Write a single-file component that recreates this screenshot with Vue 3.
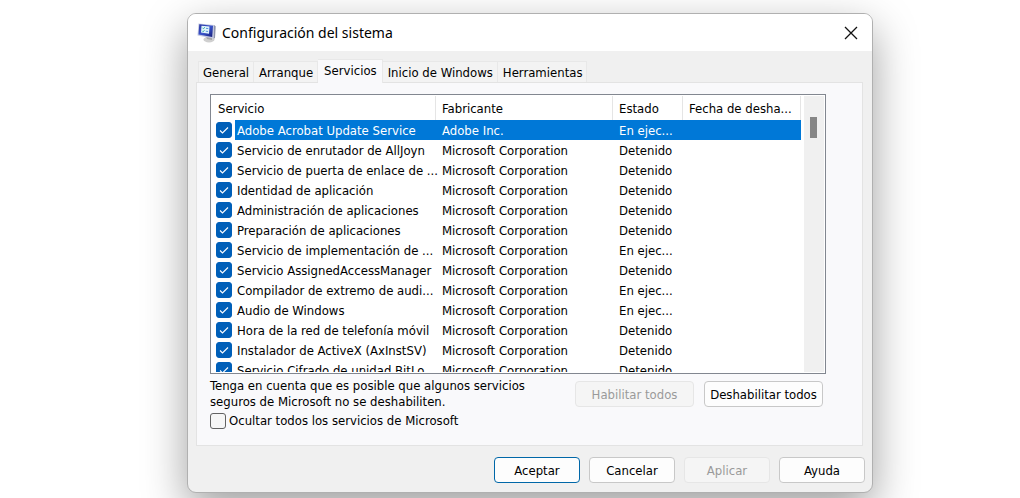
<script setup>
import { ref } from 'vue'

const tabs = ['General', 'Arranque', 'Servicios', 'Inicio de Windows', 'Herramientas']
const activeTab = ref('Servicios')
const hideMicrosoft = ref(false)
const selected = ref(0)

const ms = 'Microsoft Corporation'
const services = ref([
  { name: 'Adobe Acrobat Update Service', maker: 'Adobe Inc.', state: 'En ejec...', on: true },
  { name: 'Servicio de enrutador de AllJoyn', maker: ms, state: 'Detenido', on: true },
  { name: 'Servicio de puerta de enlace de ...', maker: ms, state: 'Detenido', on: true },
  { name: 'Identidad de aplicación', maker: ms, state: 'Detenido', on: true },
  { name: 'Administración de aplicaciones', maker: ms, state: 'Detenido', on: true },
  { name: 'Preparación de aplicaciones', maker: ms, state: 'Detenido', on: true },
  { name: 'Servicio de implementación de ...', maker: ms, state: 'En ejec...', on: true },
  { name: 'Servicio AssignedAccessManager', maker: ms, state: 'Detenido', on: true },
  { name: 'Compilador de extremo de audi...', maker: ms, state: 'En ejec...', on: true },
  { name: 'Audio de Windows', maker: ms, state: 'En ejec...', on: true },
  { name: 'Hora de la red de telefonía móvil', maker: ms, state: 'Detenido', on: true },
  { name: 'Instalador de ActiveX (AxInstSV)', maker: ms, state: 'Detenido', on: true },
  { name: 'Servicio Cifrado de unidad BitLo...', maker: ms, state: 'Detenido', on: true }
])
</script>

<template>
  <main class="desktop">
    <section class="dialog" aria-labelledby="dialog-title">
      <header class="titlebar">
        <svg class="app-icon" viewBox="0 0 20 20" aria-hidden="true">
          <defs>
            <linearGradient id="screen" x1="0" y1="0" x2="1" y2="1">
              <stop offset="0" stop-color="#2a35a0" />
              <stop offset="0.5" stop-color="#3a55cc" />
              <stop offset="1" stop-color="#141c78" />
            </linearGradient>
          </defs>
          <ellipse cx="12" cy="16.500" rx="5.500" ry="3" fill="#cfcfcf" />
          <path d="M9 13l6 1v3l-5-1z" fill="#a5a5a8" />
          <path d="M1.500 .5l15.500 1.500-.5 13.500L.5 12.500z" fill="#c3c8e2" />
          <path d="M2.300 1.200l13.700 1.500-.8 11.300L1.500 11.500z" fill="url(#screen)" />
          <path d="M4.500 2.700l8 .9-.5 7.200-8-1.200z" fill="#dff3fb" />
          <path d="M5.500 4.800l1 1 1.300-1.700M5.200 7.800l1 1 1.300-1.700" fill="none" stroke="#35a9a0" stroke-width="0.900" />
          <path d="M9 5.300l2.300.3M8.800 8.200l2.300.3" stroke="#5a97e0" stroke-width="1" />
          <path d="M17 2l1.700 1.200-.7 12-1.500.3z" fill="#8f94ab" />
        </svg>
        <h1 id="dialog-title">Configuración del sistema</h1>
        <button class="close" type="button" aria-label="Cerrar">
          <svg viewBox="0 0 14 14" aria-hidden="true"><path d="M1 1l12 12M13 1L1 13" /></svg>
        </button>
      </header>

      <div class="body">
        <nav class="tabs" role="tablist">
          <button
            v-for="tab in tabs"
            :key="tab"
            type="button"
            role="tab"
            class="tab"
            :class="{ active: tab === activeTab }"
            :aria-selected="tab === activeTab"
            @click="activeTab = tab"
          >{{ tab }}</button>
        </nav>

        <div class="panel" role="tabpanel">
          <div class="list">
            <div class="viewport">
              <table>
                <colgroup>
                  <col class="c-check" /><col class="c-name" /><col class="c-maker" /><col class="c-state" /><col />
                </colgroup>
                <thead>
                  <tr>
                    <th colspan="2">Servicio</th>
                    <th>Fabricante</th>
                    <th>Estado</th>
                    <th>Fecha de desha...</th>
                  </tr>
                </thead>
                <tbody>
                  <tr
                    v-for="(service, i) in services"
                    :key="service.name"
                    :class="{ selected: i === selected }"
                    @click="selected = i"
                  >
                    <td class="check">
                      <span class="tick">
                        <input :id="'service-' + i" v-model="service.on" type="checkbox" />
                        <svg viewBox="0 0 16 16" aria-hidden="true"><path d="M4 8.500l2.500 2.500L12 5.500" /></svg>
                      </span>
                    </td>
                    <td class="name"><label :for="'service-' + i">{{ service.name }}</label></td>
                    <td>{{ service.maker }}</td>
                    <td>{{ service.state }}</td>
                    <td></td>
                  </tr>
                </tbody>
              </table>
            </div>
            <div class="scrollbar"><div class="thumb"></div></div>
          </div>

          <div class="below">
            <div class="notes">
              <p>Tenga en cuenta que es posible que algunos servicios seguros de Microsoft no se deshabiliten.</p>
              <label class="hide">
                <input v-model="hideMicrosoft" type="checkbox" />
                <span>Ocultar todos los servicios de Microsoft</span>
              </label>
            </div>
            <div class="bulk">
              <button class="btn" type="button" disabled>Habilitar todos</button>
              <button class="btn" type="button">Deshabilitar todos</button>
            </div>
          </div>
        </div>

        <footer class="actions">
          <button class="btn primary" type="button">Aceptar</button>
          <button class="btn" type="button">Cancelar</button>
          <button class="btn" type="button" disabled>Aplicar</button>
          <button class="btn" type="button">Ayuda</button>
        </footer>
      </div>
    </section>
  </main>
</template>

<style>
body {
  margin: 0;
  background: #fff;
}
</style>

<style scoped>
* {
  box-sizing: border-box;
}
.desktop {
  display: flex;
  height: 100vh;
  padding: 13px 147px 5px 187px;
  overflow: hidden;
  font-family: Tahoma, "DejaVu Sans Condensed", "Noto Sans", sans-serif;
  font-size: 13px;
  line-height: 16px;
  color: #000;
}
button,
input {
  margin: 0;
  font: inherit;
  color: inherit;
}
.dialog {
  display: flex;
  flex: 1;
  flex-direction: column;
  min-width: 0;
  overflow: hidden;
  border: 1px solid #b0b0b0;
  border-radius: 9px;
  background: #f0f0f0;
  box-shadow: 0 16px 44px rgba(0, 0, 0, 0.38);
}
.titlebar {
  display: flex;
  align-items: center;
  height: 37px;
  padding: 0 14px 0 9px;
  background: #fff;
}
.app-icon {
  width: 20px;
  height: 20px;
}
h1 {
  flex: 1;
  margin: 0 0 0 5px;
  font-family: "Noto Sans", sans-serif;
  font-size: 14px;
  font-weight: 400;
  line-height: 20px;
}
.close {
  display: flex;
  padding: 0;
  border: 0;
  background: none;
}
.close svg {
  width: 14px;
  height: 14px;
  fill: none;
  stroke: #111;
  stroke-width: 1.3;
}
.body {
  display: flex;
  flex: 1;
  flex-direction: column;
  min-height: 0;
  padding: 8px 7px 9px 8px;
}
.tabs {
  display: flex;
  align-items: flex-end;
  height: 23px;
  padding-left: 2px;
}
.tab {
  height: 21px;
  padding: 2px 4px 0 5px;
  border: 1px solid #e8e8e8;
  border-bottom: 0;
  border-left-width: 0;
  background: #f3f3f3;
  white-space: nowrap;
}
.tab:first-child {
  border-left-width: 1px;
  padding-left: 4px;
}
.tab.active {
  z-index: 1;
  height: 24px;
  margin-bottom: -1px;
  padding: 0 5px 2px 6px;
  background: #f9f9fb;
}
.panel {
  display: flex;
  flex: 1;
  flex-direction: column;
  min-height: 0;
  margin-right: 2px;
  padding: 11px 36px 16px 13px;
  border: 1px solid #e3e3e3;
  background: #f9f9fb;
}
.list {
  display: flex;
  flex: 1;
  min-height: 0;
  padding: 1px;
  border: 1px solid #828790;
  background: #fff;
}
.viewport {
  flex: 1;
  min-width: 0;
  overflow: hidden;
}
table {
  width: 100%;
  border-spacing: 0;
  table-layout: fixed;
}
.c-check {
  width: 23px;
}
.c-name {
  width: 201px;
}
.c-maker {
  width: 177px;
}
.c-state {
  width: 70px;
}
th {
  height: 24px;
  padding: 2px 0 0 6px;
  border-right: 1px solid #e5e5e5;
  font-weight: 400;
  text-align: left;
  white-space: nowrap;
}
td {
  height: 20px;
  padding: 2px 0 0 6px;
  white-space: nowrap;
}
td.check {
  padding: 0 0 0 4px;
}
td.name {
  padding-left: 2px;
}
.selected td:not(.check) {
  background: #0078d7;
  color: #fff;
}
.tick {
  display: grid;
  width: 16px;
  height: 16px;
}
.tick input,
.tick svg {
  grid-area: 1 / 1;
  width: 16px;
  height: 16px;
}
.tick svg {
  fill: none;
  stroke: #fff;
  stroke-width: 1.1;
  pointer-events: none;
}
input {
  appearance: none;
  border: 1px solid #626262;
  border-radius: 3px;
  background: #f6f6f6;
}
.tick input:checked {
  border-color: #005fb8;
  background: #005fb8;
}
.scrollbar {
  width: 20px;
  margin-left: 3px;
  padding: 21px 7px 0 6px;
  background: #f0f0f0;
}
.thumb {
  height: 21px;
  background: #868686;
}
.below {
  display: flex;
  justify-content: space-between;
  padding-top: 4px;
}
.notes {
  flex: 0 1 330px;
}
.notes p {
  margin: 0 0 3px;
}
.hide {
  display: flex;
  align-items: center;
  gap: 3px;
}
.hide input {
  width: 16px;
  height: 16px;
}
.bulk {
  display: flex;
  gap: 10px;
  padding: 3px 3px 0 0;
}
.btn {
  width: 86px;
  height: 26px;
  padding: 1px 0 0;
  border: 1px solid #c8c8c8;
  border-radius: 4px;
  background: #fdfdfd;
  white-space: nowrap;
}
.bulk .btn {
  width: 119px;
}
.btn:disabled {
  border-color: #e6e6e6;
  background: #f5f5f5;
  color: #9a9a9a;
}
.btn.primary {
  border-color: #0067a8;
}
.actions {
  display: flex;
  justify-content: flex-end;
  gap: 9px;
  padding-top: 11px;
}
</style>
